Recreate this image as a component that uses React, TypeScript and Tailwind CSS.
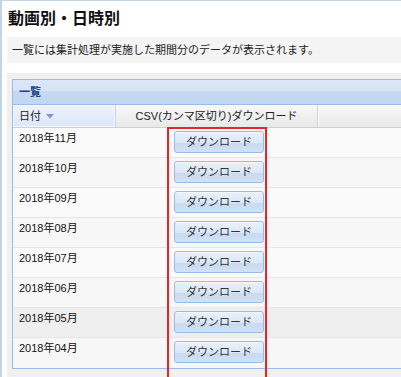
import React from 'react';

const rows = ['2018年11月', '2018年10月', '2018年09月', '2018年08月', '2018年07月', '2018年06月', '2018年05月', '2018年04月'];

const font = { fontFamily: '"Liberation Sans", "Noto Sans CJK JP", sans-serif' };

function DownloadButton() {
  return (
    <button className="w-[90px] h-[22px] rounded-[3px] border border-[#99bbe8] bg-[linear-gradient(to_bottom,#e8f0fa_0%,#dce8f7_55%,#c8daf1_56%,#d2e2f5_100%)] shadow-[inset_0_1px_0_#f4f8fd] text-[11px] text-[#333] leading-none flex items-center justify-center">
      ダウンロード
    </button>
  );
}

export default function App() {
  return (
    <div className="relative w-[401px] h-[377px] overflow-hidden bg-white border-t border-l-2 border-[#c3d3e8]" style={font}>
      {/* Title */}
      <div className="h-[36px] pl-[6px] flex items-center">
        <h1 className="text-[16px] font-bold text-[#111] leading-none">動画別・日時別</h1>
      </div>

      {/* Note */}
      <div className="ml-[5px] h-[26px] bg-[#f4f4f4] pl-[5px] flex items-center text-[11px] text-[#222]">
        一覧には集計処理が実施した期間分のデータが表示されます。
      </div>

      {/* Grid panel */}
      <div className="ml-[5px] mt-[10px] h-[400px] bg-[#f0f0f0] pl-[5px] pt-[6px]">
        <div className="border-l border-t border-b border-[#99bbe8] bg-[#fafafa]">
          {/* Panel header */}
          <div className="h-[25px] border-b border-[#99bbe8] bg-[linear-gradient(to_bottom,#dce8f7_0%,#d5e3f5_45%,#c6d9f1_46%,#c2d6f0_100%)] pl-[6px] flex items-center">
            <span className="text-[11px] font-bold text-[#15428b]">一覧</span>
          </div>

          {/* Column header */}
          <div className="h-[23px] flex border-b border-[#d0d0d0] bg-[linear-gradient(to_bottom,#f9f9f9,#e8e8e8)] text-[11px] text-[#222]">
            <div className="w-[103px] flex items-center pl-[6px] gap-[5px] bg-[linear-gradient(to_bottom,#eef4fc,#dae7f7)] border-r border-[#c5d5ea] shadow-[inset_0_0_0_1px_#f3f7fd]">
              <span>日付</span>
              <svg width="8" height="5" viewBox="0 0 8 5">
                <path d="M0 0 L8 0 L4 4.5 Z" fill="#7d98c2" />
              </svg>
            </div>
            <div className="w-[202px] flex items-center justify-center border-r border-[#d0d0d0] shadow-[1px_0_0_#fff]">
              CSV(カンマ区切り)ダウンロード
            </div>
            <div className="flex-1" />
          </div>

          {/* Rows */}
          {rows.map((label, i) => (
            <div
              key={label}
              className={`h-[30px] flex ${i === rows.length - 1 ? '' : 'border-b border-[#e6e6e6]'} ${
                i === 6 ? 'bg-[#efefef]' : i % 2 === 1 ? 'bg-[#f7f7f7]' : 'bg-[#fafafa]'
              }`}
            >
              <div className="w-[103px] pl-[6px] pt-[4px] text-[11px] leading-[13px] text-[#111]">{label}</div>
              <div className="w-[202px] flex justify-center pl-[4px] pt-[3px]">
                <DownloadButton />
              </div>
            </div>
          ))}
        </div>
      </div>

      {/* Annotation */}
      <div className="absolute left-[165px] top-[126px] w-[100px] h-[252px] border-[2.5px] border-[#e8242a]" />
    </div>
  );
}
